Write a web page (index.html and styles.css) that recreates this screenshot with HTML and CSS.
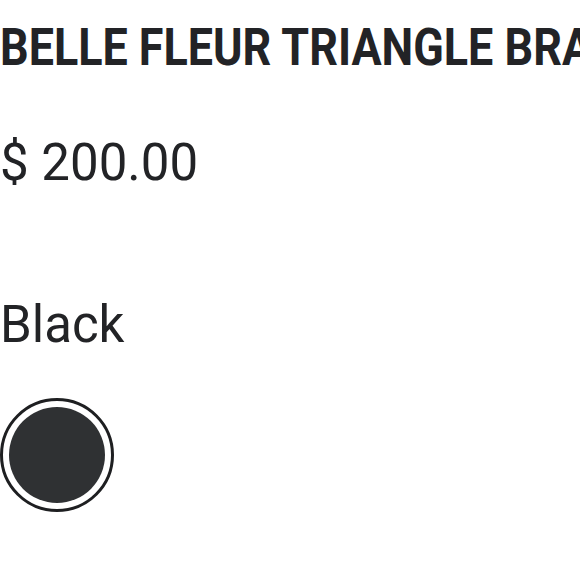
FILE: index.html
```html
<!DOCTYPE html>
<html lang="en">
<head>
    <meta charset="UTF-8">
    <meta name="viewport" content="width=device-width, initial-scale=1.0">
    <title>Belle Fleur Triangle Bra</title>
    <link rel="stylesheet" href="styles.css">
</head>
<body>
    <div class="product">
        <h1 class="product-title"><span>BELLE FLEUR TRIANGLE BRA</span></h1>
        <p class="price">$ 200.00</p>
        <p class="color-name">Black</p>
        <div class="swatches">
            <button class="swatch selected" title="Black"><span class="swatch-fill"></span></button>
        </div>
    </div>
</body>
</html>
```

FILE: styles.css
```css
body {
    margin: 0;
    background: #fff;
    color: #222326;
    font-family: Roboto, "Liberation Sans", sans-serif;
    overflow: hidden;
}

.product {
    padding-top: 18px;
}

.product-title {
    margin: 0;
    font-size: 51px;
    line-height: 60px;
    font-weight: 700;
    white-space: nowrap;
    overflow: hidden;
}

.product-title span {
    display: inline-block;
    transform: scaleX(0.88);
    transform-origin: left center;
}

.price {
    margin: 55px 0 0;
    font-size: 51px;
    line-height: 60px;
}

.color-name {
    margin: 102px 0 0;
    font-size: 51px;
    line-height: 60px;
}

.swatches {
    display: flex;
    margin-top: 43px;
}

.swatch {
    width: 114px;
    height: 114px;
    padding: 6px;
    border: 3px solid #1e1f21;
    border-radius: 50%;
    background: #fff;
    cursor: pointer;
}

.swatch-fill {
    display: block;
    width: 100%;
    height: 100%;
    border-radius: 50%;
    background: #2f3133;
}
```
